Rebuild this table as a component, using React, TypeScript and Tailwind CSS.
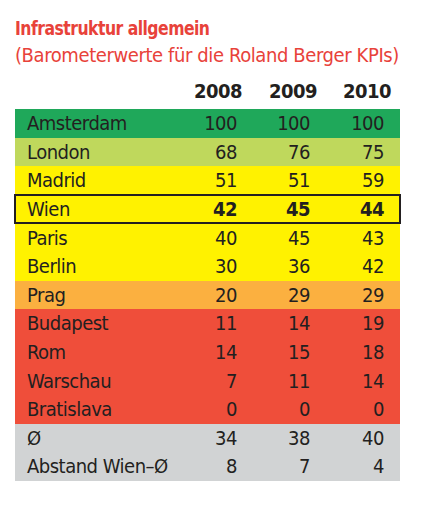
import React from 'react';

type Row = { city: string; values: number[]; bg: string; bold?: boolean };

const rows: Row[] = [
  { city: 'Amsterdam', values: [100, 100, 100], bg: 'bg-[#1fa85a]' },
  { city: 'London', values: [68, 76, 75], bg: 'bg-[#bfd85c]' },
  { city: 'Madrid', values: [51, 51, 59], bg: 'bg-[#fff200]' },
  { city: 'Wien', values: [42, 45, 44], bg: 'bg-[#fff200]', bold: true },
  { city: 'Paris', values: [40, 45, 43], bg: 'bg-[#fff200]' },
  { city: 'Berlin', values: [30, 36, 42], bg: 'bg-[#fff200]' },
  { city: 'Prag', values: [20, 29, 29], bg: 'bg-[#fbb040]' },
  { city: 'Budapest', values: [11, 14, 19], bg: 'bg-[#ef4e3a]' },
  { city: 'Rom', values: [14, 15, 18], bg: 'bg-[#ef4e3a]' },
  { city: 'Warschau', values: [7, 11, 14], bg: 'bg-[#ef4e3a]' },
  { city: 'Bratislava', values: [0, 0, 0], bg: 'bg-[#ef4e3a]' },
  { city: 'Ø', values: [34, 38, 40], bg: 'bg-[#d1d3d4]' },
  { city: 'Abstand Wien–Ø', values: [8, 7, 4], bg: 'bg-[#d1d3d4]' },
];

const font = { fontFamily: '"DejaVu Sans Condensed", "DejaVu Sans", sans-serif' };

export default function App() {
  return (
    <div className="w-[423px] h-[512px] bg-white text-[#231f20]" style={font}>
      <div className="pl-[15px] pt-[15px] whitespace-nowrap">
        <h1 className="text-[20px] leading-[26px] font-bold tracking-[-0.6px] text-[#e8423a] origin-left scale-x-[0.87]">
          Infrastruktur allgemein
        </h1>
        <p className="text-[20px] leading-[28px] tracking-[-0.4px] text-[#e8423a]">(Barometerwerte für die Roland Berger KPIs)</p>
      </div>

      <div className="ml-[15px] w-[385px] mt-[4px]">
        <div className="flex h-[36px] items-center text-[20px] font-bold tracking-[-0.5px]">
          <div className="flex-1" />
          <div className="w-[60px] text-right">2008</div>
          <div className="w-[75px] text-right">2009</div>
          <div className="w-[74px] text-right">2010</div>
          <div className="w-[9px]" />
        </div>

        {rows.map((r) => (
          <div
            key={r.city}
            className={`${r.bg} flex h-[28.6px] items-center text-[20px] tracking-[-0.5px] whitespace-nowrap ${r.bold ? 'outline-[2.5px] outline-[#231f20] -outline-offset-[1px] relative' : ''}`}
          >
            <div className="flex-1 pl-[12px]">{r.city}</div>
            {r.values.map((v, i) => (
              <div
                key={i}
                className={`text-right ${i === 0 ? 'w-[60px]' : i === 1 ? 'w-[73px]' : 'w-[74px]'} ${r.bold ? 'font-bold' : ''}`}
              >
                {v}
              </div>
            ))}
            <div className="w-[16px]" />
          </div>
        ))}
      </div>
    </div>
  );
}
